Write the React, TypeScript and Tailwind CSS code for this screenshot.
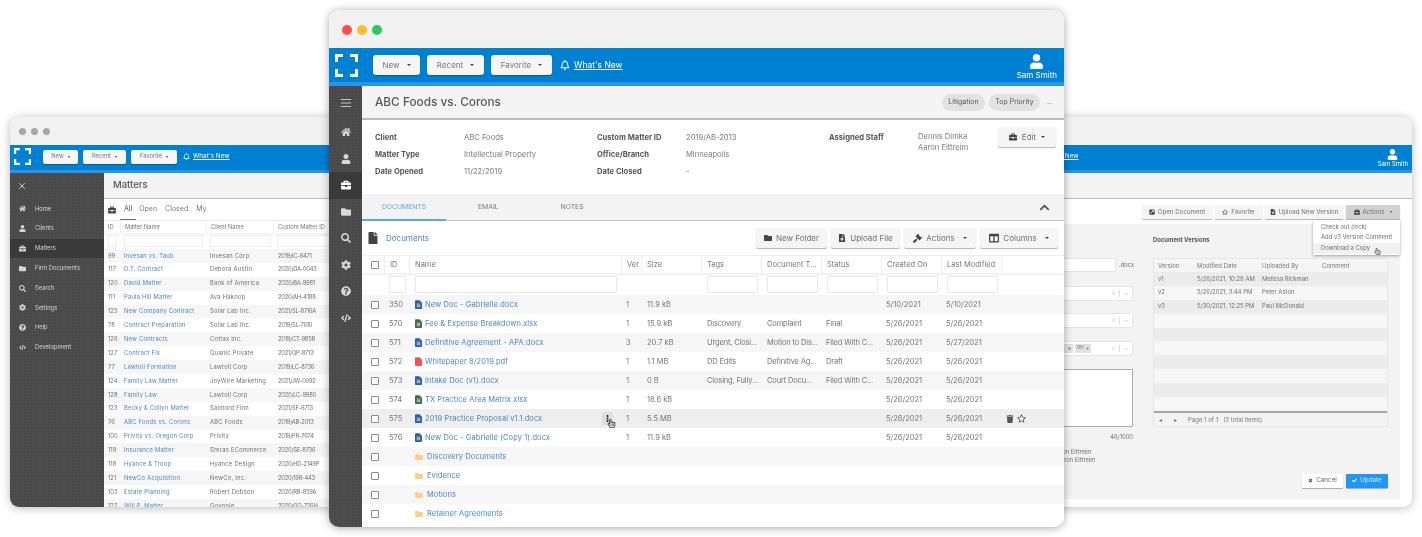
import type { ReactNode } from "react";
import {
  FaBriefcase,
  FaCheck,
  FaChevronUp,
  FaCode,
  FaCog,
  FaColumns,
  FaEllipsisV,
  FaExternalLinkSquareAlt,
  FaFile,
  FaFileUpload,
  FaFolder,
  FaGavel,
  FaHome,
  FaQuestionCircle,
  FaRegBell,
  FaRegHandPointer,
  FaRegStar,
  FaSearch,
  FaTimes,
  FaTrash,
  FaUser,
} from "react-icons/fa";
import { LuChevronDown, LuMenu, LuX } from "react-icons/lu";

const docs = [
  { id: "350", name: "New Doc - Gabrielle.docx", kind: "doc", ver: "1", size: "11.9 kB", tags: "", type: "", status: "", created: "5/10/2021", modified: "5/10/2021" },
  { id: "570", name: "Fee & Expense Breakdown.xlsx", kind: "xls", ver: "1", size: "15.9 kB", tags: "Discovery", type: "Complaint", status: "Final", created: "5/26/2021", modified: "5/26/2021" },
  { id: "571", name: "Definitive Agreement - APA.docx", kind: "doc", ver: "3", size: "20.7 kB", tags: "Urgent, Closi...", type: "Motion to Dis...", status: "Filed With C...", created: "5/26/2021", modified: "5/27/2021" },
  { id: "572", name: "Whitepaper 8/2019.pdf", kind: "pdf", ver: "1", size: "1.1 MB", tags: "DD Edits", type: "Definitive Ag...", status: "Draft", created: "5/26/2021", modified: "5/26/2021" },
  { id: "573", name: "Intake Doc (v1).docx", kind: "doc", ver: "1", size: "0 B", tags: "Closing, Fully...", type: "Court Docu...", status: "Filed With C...", created: "5/26/2021", modified: "5/26/2021" },
  { id: "574", name: "TX Practice Area Matrix.xlsx", kind: "xls", ver: "1", size: "18.6 kB", tags: "", type: "", status: "", created: "5/26/2021", modified: "5/26/2021" },
  { id: "575", name: "2019 Practice Proposal v1.1.docx", kind: "doc", ver: "1", size: "5.5 MB", tags: "", type: "", status: "", created: "5/26/2021", modified: "5/26/2021" },
  { id: "576", name: "New Doc - Gabrielle (Copy 1).docx", kind: "doc", ver: "1", size: "11.9 kB", tags: "", type: "", status: "", created: "5/26/2021", modified: "5/26/2021" },
];

const folders = ["Discovery Documents", "Evidence", "Motions", "Retainer Agreements"];

const matters = [
  ["99", "Invesan vs. Taub", "Invesan Corp", "2019/IC-6471"],
  ["117", "D.T. Contract", "Debora Austin", "2020/DA-0043"],
  ["120", "David Matter", "Bank of America", "2020/BA-9981"],
  ["111", "Paula Hill Matter", "Ava Hakoop", "2020/AH-4188"],
  ["125", "New Company Contract", "Solar Lab Inc.", "2021/SL-8716A"],
  ["78", "Contract Preparation", "Solar Lab Inc.", "2019/SL-7610"],
  ["126", "New Contracts", "Cottax Inc.", "2019/CT-985R"],
  ["127", "Contract Fix", "Quanic Private", "2021/QP-8713"],
  ["77", "Lawtoil Formation", "Lawtoil Corp", "2019/LC-8736"],
  ["124", "Family Law Matter", "JoyWire Marketing", "2021/JW-0092"],
  ["128", "Family Law", "Lawtoil Corp", "2020/LC-9980"],
  ["123", "Becky & Collyn Matter", "Salmord Finn", "2021/SF-6713"],
  ["76", "ABC Foods vs. Corons", "ABC Foods", "2019/AB-2013"],
  ["100", "Privity vs. Oregon Corp", "Privity", "2019/PR-7674"],
  ["119", "Insurance Matter", "Steras ECommerce", "2020/SE-8736"],
  ["118", "Hyance & Troop", "Hyance Design", "2020/HD-2149P"],
  ["121", "NewCo Acquisition", "NewCo, Inc.", "2020/198-443"],
  ["103", "Estate Planning", "Robert Dobson", "2020/RB-859A"],
  ["122", "Will P. Matter", "Govpole", "2020/GO-726H"],
];

const versions = [
  ["v1", "5/26/2021, 10:29 AM", "Melissa Rickman"],
  ["v2", "5/26/2021, 3:44 PM", "Peter Aston"],
  ["v3", "5/30/2021, 12:25 PM", "Paul McDonald"],
  [],
  [],
  [],
  [],
  [],
  [],
  [],
];

const navItems = [
  { label: "Home", icon: FaHome },
  { label: "Clients", icon: FaUser },
  { label: "Matters", icon: FaBriefcase, active: true },
  { label: "Firm Documents", icon: FaFolder },
  { label: "Search", icon: FaSearch },
  { label: "Settings", icon: FaCog },
  { label: "Help", icon: FaQuestionCircle },
  { label: "Development", icon: FaCode },
];

const Caret = ({ className }: { className: string }) => (
  <span className={`inline-block border-x-transparent border-t-current border-b-0 ${className}`} />
);

const Logo = ({ className }: { className: string }) => (
  <svg viewBox="0 0 23 23" className={className} fill="none" stroke="#fff" strokeWidth="3">
    <path d="M1.5 8V1.5H8M15 1.5h6.500V8M21.500 15v6.500H15M8 21.500H1.500V15" />
  </svg>
);

const FileIcon = ({ kind }: { kind: string }) => {
  const color = kind === "pdf" ? "#f0524c" : kind === "xls" ? "#3f6b4a" : "#2f5f9e";
  return (
    <svg viewBox="0 0 8 10" className="w-[7px] h-[9px] shrink-0">
      <path d="M0 1a1 1 0 0 1 1-1h4l3 3v6a1 1 0 0 1-1 1H1a1 1 0 0 1-1-1z" fill={color} />
      {kind !== "pdf" && <path d="M2 4.500h4M2 6h4M2 7.500h4" stroke="#fff" strokeWidth="0.7" />}
    </svg>
  );
};

const HeaderButton = ({ label, w, small }: { label: string; w: string; small?: boolean }) => (
  <div
    className={`${w} ${
      small ? "h-[14px] text-[5.8px] gap-[4px] rounded-[2px]" : "h-[20px] text-[8px] gap-[7px] rounded-[3px]"
    } bg-[#f6f6f6] text-[#777] flex items-center justify-center shadow-[0_1px_1px_rgba(0,0,0,0.3)]`}
  >
    {label}
    <Caret className={`text-[#444] ${small ? "border-x-[1.5px] border-t-[2px]" : "border-x-[2px] border-t-[2.5px]"}`} />
  </div>
);

const ToolButton = ({ icon, label, caret, w }: { icon: ReactNode; label: string; caret?: boolean; w: string }) => (
  <div
    className={`${w} h-[20px] flex items-center justify-center gap-[4px] rounded-[2px] bg-[#f5f5f5] text-[8px] text-[#707070] shadow-[0_1px_1px_rgba(0,0,0,0.3)]`}
  >
    {icon}
    <span>{label}</span>
    {caret && <Caret className="ml-[4px] text-[#444] border-x-[2px] border-t-[2.5px]" />}
  </div>
);

const SmallButton = ({ icon, label, w, active }: { icon: ReactNode; label: string; w: string; active?: boolean }) => (
  <div
    className={`${w} h-[14px] flex items-center justify-center gap-[3px] rounded-[1px] text-[6.2px] text-[#707070] shadow-[0_1px_1px_rgba(0,0,0,0.3)] ${
      active ? "bg-[#d2d2d2]" : "bg-[#f5f5f5]"
    }`}
  >
    {icon}
    <span>{label}</span>
    {active && <Caret className="ml-[3px] text-[#444] border-x-[1.5px] border-t-[2px]" />}
  </div>
);

const Checkbox = () => <div className="size-[8px] rounded-[1px] border border-[#8a8a8a] bg-white" />;

const WINDOW_SHADOW = "shadow-[0_1px_10px_rgba(0,0,0,0.28)]";
const SIDEBAR_BG = "bg-[#4a4a4a] bg-[radial-gradient(#565656_0.6px,transparent_0.7px)] bg-[size:3px_3px]";

// small back windows share the same chrome
const SmallChrome = () => (
  <>
    <div className="h-[28px] shrink-0 bg-[#f1f1f1] flex items-center gap-[5px] pl-[9px]">
      <div className="size-[7px] rounded-full bg-[#a8a8a8]" />
      <div className="size-[7px] rounded-full bg-[#a8a8a8]" />
      <div className="size-[7px] rounded-full bg-[#a8a8a8]" />
    </div>
    <div className="h-[28px] shrink-0 bg-[#0080d0] border-b-[3px] border-[#2a93ee] flex items-center pl-[4px] pb-[2px] relative">
      <Logo className="size-[17px] shrink-0" />
      <div className="flex ml-[12px] gap-[5px]">
        <HeaderButton small label="New" w="w-[35px]" />
        <HeaderButton small label="Recent" w="w-[43px]" />
        <HeaderButton small label="Favorite" w="w-[46px]" />
      </div>
      <FaRegBell className="ml-[6px] size-[7px] text-white" />
      <span className="ml-[3px] text-[6.4px] text-white underline">What&apos;s New</span>
      <div className="absolute right-[4px] top-[4px] flex flex-col items-center text-white">
        <FaUser className="size-[11px]" />
        <span className="text-[6px] leading-[7px]">Sam Smith</span>
      </div>
    </div>
  </>
);

const LeftWindow = () => (
  <div className={`absolute left-[10px] top-[117px] w-[690px] h-[390px] rounded-[9px] overflow-hidden bg-white flex flex-col ${WINDOW_SHADOW}`}>
    <SmallChrome />
    <div className="flex flex-1 min-h-0">
      <aside className={`w-[94px] shrink-0 ${SIDEBAR_BG} text-[#d4d4d4] text-[5.8px]`}>
        <div className="h-[26px] flex items-center pl-[7px]">
          <LuX className="size-[10px] text-[#ddd]" />
        </div>
        {navItems.map((item) => (
          <div key={item.label} className={`h-[19.8px] flex items-center ${item.active ? "bg-[#3a3a3a]" : ""}`}>
            <span className="w-[25px] flex justify-center">
              <item.icon className="size-[7px]" />
            </span>
            <span>{item.label}</span>
          </div>
        ))}
      </aside>
      <main className="flex-1 min-w-0 flex flex-col overflow-hidden">
        <div className="h-[26px] shrink-0 bg-[#f4f4f4] border-b border-[#bbb] flex items-center pl-[9px] text-[9.500px] font-medium text-[#555]">
          Matters
        </div>
        <div className="h-[21px] shrink-0 flex items-center relative text-[7px] text-[#777]">
          <FaBriefcase className="ml-[4px] size-[8px] text-[#444]" />
          <span className="ml-[8px] text-[#555]">All</span>
          <span className="ml-[7px]">Open</span>
          <span className="ml-[8px]">Closed</span>
          <span className="ml-[8px]">My</span>
          <div className="absolute left-[16px] bottom-0 w-[16px] h-[1px] bg-[#2a7fd0]" />
        </div>
        <div className="grid grid-cols-[16px_86px_67px_1fr] h-[13px] shrink-0 items-center text-[5.700px] text-[#777] border-t border-[#eee]">
          <span className="pl-[4px]">ID</span>
          <span className="pl-[4px] border-l border-[#eee] h-full flex items-center">Matter Name</span>
          <span className="pl-[4px] border-l border-[#eee] h-full flex items-center">Client Name</span>
          <span className="pl-[4px] border-l border-[#eee] h-full flex items-center">Custom Matter ID</span>
        </div>
        <div className="grid grid-cols-[16px_86px_67px_1fr] h-[16px] shrink-0 items-center shadow-[inset_0_2px_2px_rgba(0,0,0,0.05)]">
          <span className="ml-[4px] w-[9px] h-[12px] border border-[#eee] bg-white" />
          <span className="ml-[4px] w-[79px] h-[12px] border border-[#eee] bg-white" />
          <span className="ml-[4px] w-[61px] h-[12px] border border-[#eee] bg-white" />
          <span className="ml-[4px] w-[300px] h-[12px] border border-[#eee] bg-white" />
        </div>
        {matters.map((m, i) => (
          <div
            key={m[0]}
            className={`grid grid-cols-[16px_86px_67px_1fr] h-[13.900px] shrink-0 items-center text-[5.800px] text-[#707070] whitespace-nowrap ${
              i % 2 === 0 ? "bg-[#f6f6f6]" : "bg-white"
            }`}
          >
            <span className="pl-[4px]">{m[0]}</span>
            <span className="pl-[4px] tracking-[0.24px] text-[#4a86c5]">{m[1]}</span>
            <span className="pl-[4px] tracking-[0.26px]">{m[2]}</span>
            <span className="pl-[5px] tracking-[-0.25px]">{m[3]}</span>
          </div>
        ))}
      </main>
    </div>
  </div>
);

const SelectBox = ({ className, tags }: { className: string; tags?: boolean }) => (
  <div className={`${className} h-[15px] bg-white border border-[#e4e4e4] rounded-[1px] flex items-center text-[#aaa]`}>
    {tags && (
      <div className="ml-[62px] flex gap-[2px]">
        <span className="h-[9px] w-[10px] pl-[5px] flex items-center bg-[#e2e2e2] text-[#555]">
          <FaTimes className="size-[3px]" />
        </span>
        <span className="h-[9px] px-[2px] flex items-center gap-[2px] bg-[#e2e2e2] text-[4.500px] text-[#666]">
          GH <FaTimes className="size-[3px]" />
        </span>
      </div>
    )}
    <div className="ml-auto flex items-center gap-[3px] pr-[3px]">
      <LuX className="size-[5px]" />
      <span className="w-px h-[7px] bg-[#ddd]" />
      <LuChevronDown className="size-[6px]" />
    </div>
  </div>
);

const RightWindow = () => (
  <div className={`absolute left-[859px] top-[117px] w-[553px] h-[390px] rounded-[9px] overflow-hidden bg-white flex flex-col ${WINDOW_SHADOW}`}>
    <SmallChrome />
    <div className="flex flex-1 min-h-0">
      <aside className={`w-[94px] shrink-0 ${SIDEBAR_BG}`} />
      <main className="flex-1 min-w-0 flex flex-col">
        <div className="h-[26px] shrink-0 bg-[#f4f4f4] border-b border-[#bbb]" />
        <div className="h-[25px] shrink-0 flex items-center justify-end gap-[3px] pr-[12px]">
          <SmallButton icon={<FaExternalLinkSquareAlt className="size-[6px] text-[#444]" />} label="Open Document" w="w-[70px]" />
          <SmallButton icon={<FaRegStar className="size-[6px] text-[#444]" />} label="Favorite" w="w-[47px]" />
          <SmallButton icon={<FaFileUpload className="size-[6px] text-[#444]" />} label="Upload New Version" w="w-[78px]" />
          <SmallButton active icon={<FaBriefcase className="size-[6px] text-[#444]" />} label="Actions" w="w-[54px]" />
        </div>
        <div className="h-[275px] shrink-0 mr-[12px] bg-[#f3f3f3] flex">
          <div className="w-[133px] ml-[47px] shrink-0 flex flex-col text-[5.800px] text-[#707070]">
            <div className="mt-[34px] h-[14px] flex items-center gap-[3px]">
              <div className="w-[116px] h-full shrink-0 bg-white border border-[#e4e4e4] rounded-[1px]" />
              <span>.docx</span>
            </div>
            <SelectBox className="mt-[14px]" />
            <SelectBox className="mt-[12px]" />
            <SelectBox className="mt-[13px]" tags />
            <div className="mt-[13px] h-[58px] bg-white border border-[#aaa] rounded-[1px]" />
            <div className="mt-[5px] text-right leading-[10px]">46/1000</div>
            <div className="mt-[6px] pl-[53px] leading-[8px] whitespace-nowrap">Aaron Eittreim</div>
            <div className="pl-[57px] leading-[8px] whitespace-nowrap">Aaron Eittreim</div>
          </div>
          <div className="ml-[20px] w-[235px] shrink-0 flex flex-col">
            <div className="mt-[11px] h-[10px] flex items-center text-[5.900px] font-bold text-[#555]">Document Versions</div>
            <div className="mt-[13px] border border-[#e6e6e6]">
              <div className="grid grid-cols-[39px_65px_60px_1fr] h-[13px] items-center text-[6px] text-[#777] bg-[#f5f5f5]">
                <span className="pl-[4px]">Version</span>
                <span className="pl-[4px]">Modified Date</span>
                <span className="pl-[4px]">Uploaded By</span>
                <span className="pl-[4px]">Comment</span>
              </div>
              {versions.map((v, i) => (
                <div
                  key={i}
                  className={`grid grid-cols-[39px_65px_60px_1fr] h-[13.900px] items-center text-[5.900px] text-[#707070] whitespace-nowrap ${
                    i % 2 === 0 ? "bg-[#ececec]" : "bg-[#f6f6f6]"
                  }`}
                >
                  <span className="pl-[4px]">{v[0]}</span>
                  <span className="pl-[4px]">{v[1]}</span>
                  <span className="pl-[4px]">{v[2]}</span>
                  <span />
                </div>
              ))}
              <div className="h-[15px] border-t-2 border-[#a8a8a8] flex items-center text-[6px] text-[#777]">
                <span className="ml-[5px] text-[6px]">◂</span>
                <span className="ml-[12px] text-[6px]">▸</span>
                <span className="ml-[11px]">Page 1 of 1</span>
                <span className="ml-[5px]">(3 total items)</span>
              </div>
            </div>
            <div className="mt-[47px] flex justify-end gap-[3px]">
              <div className="w-[41px] h-[14px] flex items-center justify-center gap-[3px] bg-white rounded-[1px] text-[6.300px] text-[#666] shadow-[0_1px_1px_rgba(0,0,0,0.3)]">
                <FaTimes className="size-[5px] text-[#444]" />
                Cancel
              </div>
              <div className="w-[42px] h-[14px] flex items-center justify-center gap-[3px] bg-[#2196f3] rounded-[1px] text-[6.300px] text-[#cfe8fb] shadow-[0_1px_1px_rgba(0,0,0,0.3)]">
                <FaCheck className="size-[5px] text-white" />
                Update
              </div>
            </div>
          </div>
        </div>
      </main>
    </div>
    <div className="absolute left-[454px] top-[103px] w-[87px] h-[35px] bg-white rounded-[1px] py-[2px] text-[5.900px] text-[#707070] shadow-[0_1px_3px_rgba(0,0,0,0.35)]">
      <div className="h-[10.500px] pl-[8px] flex items-center">Check out (lock)</div>
      <div className="h-[10.500px] pl-[8px] flex items-center">Add v3 Version Comment</div>
      <div className="h-[10.500px] pl-[8px] flex items-center bg-[#f1f1f1]">Download a Copy</div>
      <FaRegHandPointer className="absolute left-[61px] top-[28px] size-[7px] text-[#555]" />
    </div>
  </div>
);

const COLS = "grid grid-cols-[22px_25px_212px_20px_60px_60px_60px_60px_60px_60px_1fr]";

const MainWindow = () => (
  <div className="absolute left-[329px] top-[10px] w-[735px] h-[517px] rounded-[10px] overflow-hidden bg-white flex flex-col shadow-[0_1px_9px_rgba(0,0,0,0.35)]">
    <div className="h-[38px] shrink-0 bg-[#f1f1f1] flex items-center gap-[5px] pl-[13px] pt-[2px]">
      <div className="size-[10px] rounded-full bg-[#ff4f4f]" />
      <div className="size-[10px] rounded-full bg-[#ffbd2e]" />
      <div className="size-[10px] rounded-full bg-[#2ec95c]" />
    </div>
    <div className="h-[38px] shrink-0 bg-[#0080d0] border-b-[4px] border-[#2a93ee] flex items-center pl-[6px] relative">
      <Logo className="size-[23px] shrink-0" />
      <div className="flex ml-[15px] gap-[7px]">
        <HeaderButton label="New" w="w-[47px]" />
        <HeaderButton label="Recent" w="w-[57px]" />
        <HeaderButton label="Favorite" w="w-[61px]" />
      </div>
      <FaRegBell className="ml-[8px] size-[10px] text-white" />
      <span className="ml-[4px] text-[8.500px] text-white underline">What&apos;s New</span>
      <div className="absolute right-[7px] top-[6px] flex flex-col items-center text-white">
        <FaUser className="size-[15px]" />
        <span className="mt-[2px] text-[8px] leading-[9px]">Sam Smith</span>
      </div>
    </div>
    <div className="flex flex-1 min-h-0">
      <aside className={`w-[33px] shrink-0 ${SIDEBAR_BG} text-[#d8d8d8]`}>
        <div className="h-[33px] flex items-center justify-center">
          <LuMenu className="size-[14px]" strokeWidth={1.5} />
        </div>
        {navItems.map((item) => (
          <div
            key={item.label}
            className={`h-[26.500px] flex items-center justify-center ${item.active ? "bg-[#3a3a3a] text-white" : ""}`}
          >
            <item.icon className="size-[10px]" />
          </div>
        ))}
      </aside>
      <main className="flex-1 min-w-0 flex flex-col">
        <div className="h-[34px] shrink-0 bg-[#f4f4f4] border-b-2 border-[#bdbdbd] flex items-center pl-[13px] pr-[11px]">
          <h1 className="text-[11.800px] font-medium text-[#585858] pt-[1px]">ABC Foods vs. Corons</h1>
          <span className="ml-auto h-[17px] w-[43px] rounded-full bg-[#e2e2e2] flex items-center justify-center text-[7px] text-[#555]">Litigation</span>
          <span className="ml-[4px] h-[17px] w-[51px] rounded-full bg-[#e2e2e2] flex items-center justify-center text-[7px] text-[#555]">Top Priority</span>
          <span className="ml-[7px] text-[7px] text-[#777]">...</span>
        </div>
        <div className="h-[74px] shrink-0 flex pl-[13px] pt-[9px] text-[7.600px] text-[#7a7a7a] leading-[17px]">
          <div className="w-[89px] font-bold text-[#555]">
            <div>Client</div>
            <div>Matter Type</div>
            <div>Date Opened</div>
          </div>
          <div className="w-[133px]">
            <div>ABC Foods</div>
            <div>Intellectual Property</div>
            <div>11/22/2019</div>
          </div>
          <div className="w-[89px] font-bold text-[#555]">
            <div>Custom Matter ID</div>
            <div>Office/Branch</div>
            <div>Date Closed</div>
          </div>
          <div className="w-[143px]">
            <div>2019/AB-2013</div>
            <div>Minneapolis</div>
            <div>-</div>
          </div>
          <div className="w-[89px] font-bold text-[#555]">Assigned Staff</div>
          <div className="w-[80px] leading-[10.500px] pt-[3px]">
            <div>Dennis Dimka</div>
            <div>Aaron Eittreim</div>
          </div>
          <div className="w-[58px] h-[20px] -mt-[2px] flex items-center justify-center gap-[5px] rounded-[2px] bg-[#f5f5f5] text-[#707070] text-[8px] shadow-[0_1px_1px_rgba(0,0,0,0.3)]">
            <FaBriefcase className="size-[8px] text-[#444]" />
            Edit
            <Caret className="text-[#444] border-x-[2px] border-t-[2.500px]" />
          </div>
        </div>
        <div className="h-[27px] shrink-0 bg-[#f3f3f3] border-b border-[#c4c4c4] flex items-center text-[6.800px] text-[#777] relative pr-[14px] pt-[1px]">
          <span className="w-[84px] text-center text-[#5ba4e6]">DOCUMENTS</span>
          <span className="ml-[32px]">EMAIL</span>
          <span className="ml-[62px]">NOTES</span>
          <FaChevronUp className="ml-auto size-[11px] text-[#555]" />
          <div className="absolute left-0 -bottom-[1px] w-[84px] h-[2px] bg-[#5ba4e6]" />
        </div>
        <div className="h-[34px] shrink-0 flex items-center pl-[6px] pr-[6px]">
          <FaFile className="w-[10px] h-[12px] text-[#444]" />
          <span className="ml-[8px] text-[8px] text-[#4a86c5]">Documents</span>
          <div className="ml-auto flex gap-[4px]">
            <ToolButton icon={<FaFolder className="size-[8px] text-[#444]" />} label="New Folder" w="w-[71px]" />
            <ToolButton icon={<FaFileUpload className="size-[8px] text-[#444]" />} label="Upload File" w="w-[69px]" />
            <ToolButton icon={<FaGavel className="size-[9px] text-[#444]" />} label="Actions" caret w="w-[72px]" />
            <ToolButton icon={<FaColumns className="size-[10px] text-[#444]" />} label="Columns" caret w="w-[78px]" />
          </div>
        </div>
        <div className={`${COLS} h-[18px] shrink-0 items-center text-[7.500px] text-[#777] border-t border-[#eee]`}>
          <span className="pl-[9px]"><Checkbox /></span>
          {["ID", "Name", "Ver", "Size", "Tags", "Document T...", "Status", "Created On", "Last Modified", ""].map((h) => (
            <span key={h} className="pl-[5px] h-full flex items-center border-l border-[#f0f0f0] whitespace-nowrap">{h}</span>
          ))}
        </div>
        <div className={`${COLS} h-[22px] shrink-0 items-center shadow-[inset_0_3px_3px_-1px_rgba(0,0,0,0.07)]`}>
          <span />
          <span className="ml-[5px] w-[17px] h-[17px] bg-white border border-[#e8e8e8] rounded-[1px]" />
          <span className="ml-[6px] w-[202px] h-[17px] bg-white border border-[#e8e8e8] rounded-[1px]" />
          <span />
          <span />
          {[0, 1, 2, 3, 4].map((i) => (
            <span key={i} className="ml-[6px] w-[51px] h-[17px] bg-white border border-[#e8e8e8] rounded-[1px]" />
          ))}
          <span />
        </div>
        {docs.map((d, i) => {
          const hover = d.id === "575";
          return (
            <div
              key={d.id}
              className={`${COLS} h-[19px] shrink-0 items-center text-[7.500px] text-[#757575] whitespace-nowrap ${
                hover ? "bg-[#eeeeee]" : i % 2 === 0 ? "bg-[#f6f6f6]" : "bg-white"
              }`}
            >
              <span className="pl-[9px]"><Checkbox /></span>
              <span className="pl-[5px]">{d.id}</span>
              <span className="pl-[6px] flex items-center gap-[3px] relative h-full tracking-[0.08px] text-[#4a86c5]">
                <FileIcon kind={d.kind} />
                {d.name}
                {hover && (
                  <>
                    <span className="absolute left-[193px] top-[3px] w-[11px] h-[13px] bg-[#dfdfdf] rounded-[1px] flex items-center justify-center">
                      <FaEllipsisV className="size-[7px] text-[#333]" />
                    </span>
                    <FaRegHandPointer className="absolute left-[198px] top-[10px] size-[9px] text-[#444]" />
                  </>
                )}
              </span>
              <span className="pl-[5px]">{d.ver}</span>
              <span className="pl-[6px]">{d.size}</span>
              <span className="pl-[6px] tracking-[-0.15px]">{d.tags}</span>
              <span className="pl-[6px] tracking-[-0.15px]">{d.type}</span>
              <span className="pl-[5px] tracking-[-0.15px]">{d.status}</span>
              <span className="pl-[5px]">{d.created}</span>
              <span className="pl-[5px]">{d.modified}</span>
              <span className="pl-[5px] flex items-center gap-[3px]">
                {hover && (
                  <>
                    <FaTrash className="size-[8px] text-[#555]" />
                    <FaRegStar className="size-[9px] text-[#555]" />
                  </>
                )}
              </span>
            </div>
          );
        })}
        {folders.map((f, i) => (
          <div key={f} className={`${COLS} h-[19px] shrink-0 items-center text-[7.500px] tracking-[0.08px] whitespace-nowrap ${i % 2 === 0 ? "bg-[#f6f6f6]" : "bg-white"}`}>
            <span className="pl-[9px]"><Checkbox /></span>
            <span />
            <span className="pl-[6px] flex items-center gap-[4px] text-[#4a86c5]">
              <FaFolder className="size-[8px] text-[#f7d08a]" />
              {f}
            </span>
          </div>
        ))}
      </main>
    </div>
  </div>
);

export default function App() {
  return (
    <div className="relative w-[1422px] h-[537px] overflow-hidden bg-white font-['Inter',sans-serif] blur-[0.3px]">
      <LeftWindow />
      <RightWindow />
      <MainWindow />
    </div>
  );
}
